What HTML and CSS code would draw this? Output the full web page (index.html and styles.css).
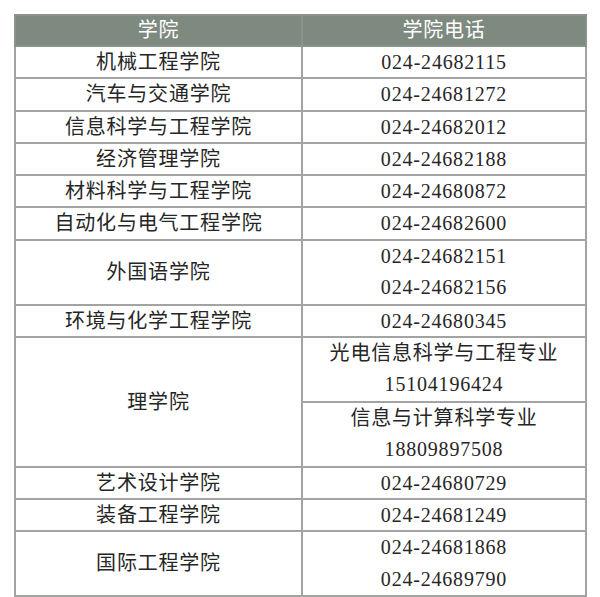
FILE: index.html
```html
<!DOCTYPE html>
<html lang="zh-CN">
<head>
<meta charset="utf-8">
<title>学院电话</title>
<link rel="stylesheet" href="styles.css">
</head>
<body>
<div class="wrap">
<table class="phones">
  <colgroup><col class="c1"><col class="c2"></colgroup>
  <thead>
    <tr><th>学院</th><th>学院电话</th></tr>
  </thead>
  <tbody>
    <tr><td>机械工程学院</td><td>024-24682115</td></tr>
    <tr><td>汽车与交通学院</td><td>024-24681272</td></tr>
    <tr><td>信息科学与工程学院</td><td>024-24682012</td></tr>
    <tr><td>经济管理学院</td><td>024-24682188</td></tr>
    <tr><td>材料科学与工程学院</td><td>024-24680872</td></tr>
    <tr><td>自动化与电气工程学院</td><td>024-24682600</td></tr>
    <tr><td>外国语学院</td><td class="multi"><div>024-24682151</div><div>024-24682156</div></td></tr>
    <tr><td>环境与化学工程学院</td><td>024-24680345</td></tr>
    <tr><td rowspan="2">理学院</td><td class="multi"><div>光电信息科学与工程专业</div><div>15104196424</div></td></tr>
    <tr><td class="multi"><div>信息与计算科学专业</div><div>18809897508</div></td></tr>
    <tr><td>艺术设计学院</td><td>024-24680729</td></tr>
    <tr><td>装备工程学院</td><td>024-24681249</td></tr>
    <tr><td>国际工程学院</td><td class="multi"><div>024-24681868</div><div>024-24689790</div></td></tr>
  </tbody>
</table>
</div>
</body>
</html>
```
FILE: styles.css
```css
html, body {
  margin: 0;
  padding: 0;
  background: #ffffff;
}

.wrap {
  padding: 14px 0 0 14px;
}

.phones {
  border-collapse: collapse;
  table-layout: fixed;
  width: 571px;
  font-family: "Liberation Serif", "Noto Sans CJK SC", serif;
  font-size: 20px;
  color: #262626;
}

.phones .c1 { width: 287px; }
.phones .c2 { width: 284px; }

.phones th,
.phones td {
  border: 2px solid #a2a4a2;
  padding: 0;
  text-align: center;
  vertical-align: middle;
  letter-spacing: 0.8px;
}

.phones th {
  background: #7e8a7f;
  color: #ffffff;
  font-weight: normal;
  line-height: 29px;
  border-color: #8a938b;
}

.phones td {
  line-height: 30.3px;
}

.phones td.multi div {
  line-height: 31.4px;
}
```
